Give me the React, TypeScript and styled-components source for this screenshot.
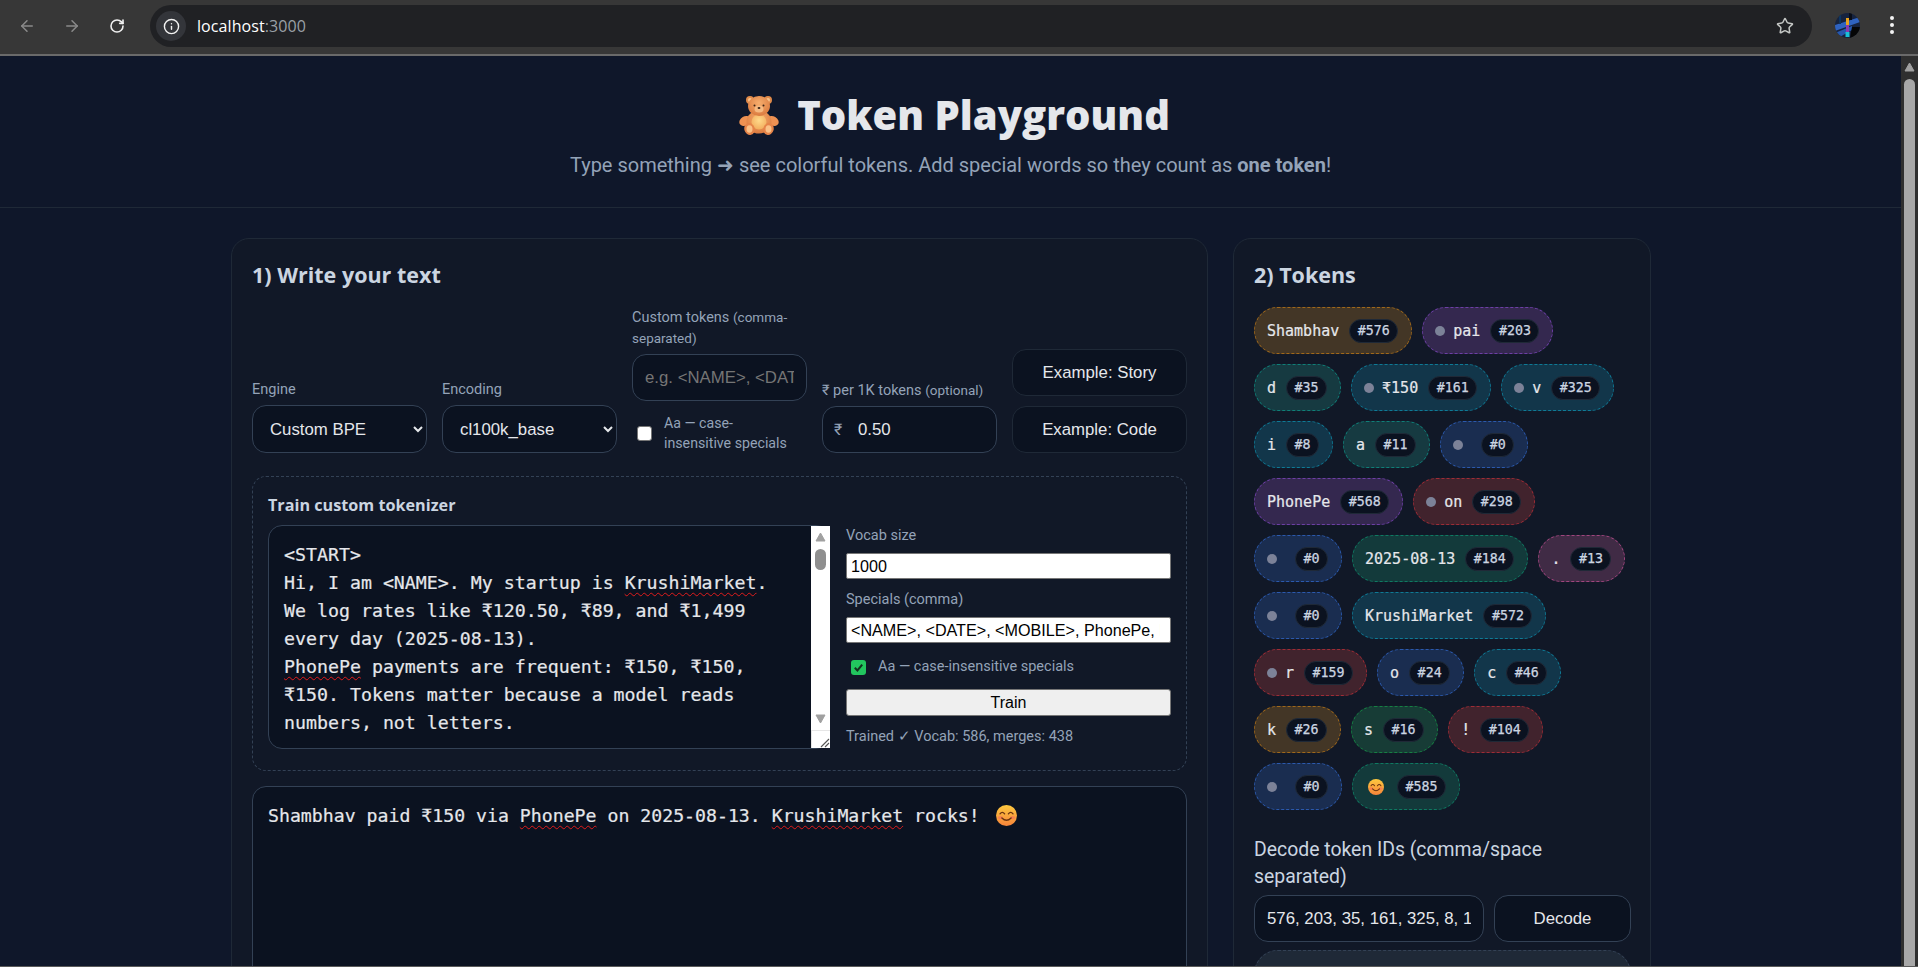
import React from 'react'
import styled, { createGlobalStyle } from 'styled-components'
import { ArrowLeft, ArrowRight, RotateCw, Info, Star } from 'lucide-react'

const UI = `Roboto, "Open Sans", sans-serif`
const DISPLAY = `"Open Sans", "Noto Sans", sans-serif`
const MONO = `"DejaVu Sans Mono", "Liberation Mono", monospace`
const ARIAL = `"Liberation Sans", Arial, sans-serif`

const GlobalStyle = createGlobalStyle`
  html, body { margin: 0; padding: 0; height: 100%; overflow: hidden; background: #0f172a; }
  * { box-sizing: border-box; }
`

const tones = {
  amber: { bg: '#433626', line: '#a0681a' },
  purple: { bg: '#34284f', line: '#6d3fa6' },
  teal: { bg: '#163a41', line: '#0f7f78' },
  cyan: { bg: '#12364a', line: '#0e7a96' },
  blue: { bg: '#1a2d50', line: '#2b59ad' },
  red: { bg: '#41232d', line: '#9e2c36' },
  emerald: { bg: '#133a3b', line: '#0f7a62' },
  pink: { bg: '#402b45', line: '#a0457e' },
  green: { bg: '#173c36', line: '#168043' },
}
type Tone = keyof typeof tones

type TokenData = { text: string; id: number; tone: Tone; space?: boolean; emoji?: boolean }

const tokens: TokenData[] = [
  { text: 'Shambhav', id: 576, tone: 'amber' },
  { text: 'pai', id: 203, tone: 'purple', space: true },
  { text: 'd', id: 35, tone: 'teal' },
  { text: '₹150', id: 161, tone: 'cyan', space: true },
  { text: 'v', id: 325, tone: 'cyan', space: true },
  { text: 'i', id: 8, tone: 'cyan' },
  { text: 'a', id: 11, tone: 'teal' },
  { text: '', id: 0, tone: 'blue', space: true },
  { text: 'PhonePe', id: 568, tone: 'purple' },
  { text: 'on', id: 298, tone: 'red', space: true },
  { text: '', id: 0, tone: 'blue', space: true },
  { text: '2025-08-13', id: 184, tone: 'emerald' },
  { text: '.', id: 13, tone: 'pink' },
  { text: '', id: 0, tone: 'blue', space: true },
  { text: 'KrushiMarket', id: 572, tone: 'cyan' },
  { text: 'r', id: 159, tone: 'red', space: true },
  { text: 'o', id: 24, tone: 'blue' },
  { text: 'c', id: 46, tone: 'cyan' },
  { text: 'k', id: 26, tone: 'amber' },
  { text: 's', id: 16, tone: 'green' },
  { text: '!', id: 104, tone: 'red' },
  { text: '', id: 0, tone: 'blue', space: true },
  { text: '', id: 585, tone: 'emerald', emoji: true },
]

const Bear = () => (
  <svg width="40" height="40" viewBox="0 0 40 40">
    <defs>
      <radialGradient id="bearFur" cx="50%" cy="35%" r="70%">
        <stop offset="0%" stopColor="#f6ad6c" />
        <stop offset="100%" stopColor="#d9773c" />
      </radialGradient>
      <radialGradient id="bearBelly" cx="50%" cy="40%" r="60%">
        <stop offset="0%" stopColor="#ffd98a" />
        <stop offset="100%" stopColor="#f3ae5e" />
      </radialGradient>
    </defs>
    <circle cx="11" cy="5" r="4" fill="#e08a4a" />
    <circle cx="29" cy="5" r="4" fill="#e08a4a" />
    <circle cx="11" cy="5" r="2" fill="#f8c48c" />
    <circle cx="29" cy="5" r="2" fill="#f8c48c" />
    <ellipse cx="6" cy="26" rx="6" ry="4.5" transform="rotate(-30 6 26)" fill="#ee9152" />
    <ellipse cx="34" cy="26" rx="6" ry="4.5" transform="rotate(30 34 26)" fill="#ee9152" />
    <ellipse cx="20" cy="27" rx="12.5" ry="11.5" fill="url(#bearFur)" />
    <ellipse cx="20" cy="27" rx="7.5" ry="7.5" fill="url(#bearBelly)" />
    <ellipse cx="20" cy="11" rx="11" ry="10" fill="url(#bearFur)" />
    <ellipse cx="20" cy="14" rx="4.5" ry="3.5" fill="#f6b980" />
    <circle cx="15.5" cy="10.5" r="1" fill="#3a2418" />
    <circle cx="24.5" cy="10.5" r="1" fill="#3a2418" />
    <ellipse cx="20" cy="13" rx="1.4" ry="1.1" fill="#3a2418" />
    <ellipse cx="10.5" cy="34" rx="5.2" ry="6" transform="rotate(-15 10.5 34)" fill="#e68449" />
    <ellipse cx="29.5" cy="34" rx="5.2" ry="6" transform="rotate(15 29.5 34)" fill="#e68449" />
    <ellipse cx="10.5" cy="34" rx="3" ry="3.8" fill="#fbc187" />
    <ellipse cx="29.5" cy="34" rx="3" ry="3.8" fill="#fbc187" />
  </svg>
)

const Smile = ({ size, id }: { size: number; id: string }) => (
  <svg width={size} height={size} viewBox="0 0 20 20">
    <defs>
      <linearGradient id={id} x1="0" y1="0" x2="0" y2="1">
        <stop offset="0%" stopColor="#fdc93f" />
        <stop offset="100%" stopColor="#f7843a" />
      </linearGradient>
    </defs>
    <circle cx="10" cy="10" r="10" fill={`url(#${id})`} />
    <ellipse cx="4.2" cy="12" rx="2.4" ry="1.6" fill="#f76d5e" opacity="0.6" />
    <ellipse cx="15.8" cy="12" rx="2.4" ry="1.6" fill="#f76d5e" opacity="0.6" />
    <path d="M3.8 8.4 Q6 5.6 8.2 8.4 M11.8 8.4 Q14 5.6 16.2 8.4" fill="none" stroke="#6b3410" strokeWidth="1.3" strokeLinecap="round" />
    <path d="M5.6 12.4 Q10 16.8 14.4 12.4" fill="none" stroke="#6b3410" strokeWidth="1.3" strokeLinecap="round" />
  </svg>
)

const Avatar = () => (
  <svg width="25" height="25" viewBox="0 0 25 25">
    <defs>
      <clipPath id="avatarClip"><circle cx="12.5" cy="12.5" r="12.5" /></clipPath>
    </defs>
    <g clipPath="url(#avatarClip)">
      <rect width="25" height="25" fill="#16233f" />
      <path d="M0 12 L25 4 L25 9 L0 18 Z" fill="#2f63c0" />
      <path d="M0 20 L17 13 L17 17 L3 25 Z" fill="#2558b0" />
      <path d="M17 14 L25 14 L25 25 L15 25 Z" fill="#050505" />
      <rect x="4" y="0" width="2" height="11" fill="#0d3560" />
      <rect x="14" y="0" width="3" height="7" fill="#090d18" />
      <rect x="11" y="5" width="3" height="8" fill="#e8a31e" />
      <rect x="11" y="12" width="3" height="7" fill="#8a3ab0" />
      <rect x="10.5" y="19" width="4" height="5" fill="#18c0d8" />
    </g>
  </svg>
)

const Triangle = ({ down }: { down?: boolean }) => (
  <svg width="11" height="10" viewBox="0 0 11 10">
    <path d={down ? 'M1 1 H10 L5.5 9 Z' : 'M5.5 1 L10 9 H1 Z'} fill="#a0a0a0" stroke="#a0a0a0" strokeLinejoin="round" />
  </svg>
)

const App = () => {
  return (
    <>
      <GlobalStyle />
      <Shell>
        <Toolbar>
          <NavButtons>
            <NavIcon $dim><ArrowLeft size={18} strokeWidth={2} /></NavIcon>
            <NavIcon $dim><ArrowRight size={18} strokeWidth={2} /></NavIcon>
            <NavIcon><RotateCw size={16} strokeWidth={2.4} /></NavIcon>
          </NavButtons>
          <Omnibox>
            <SiteInfo><Info size={17} strokeWidth={2} /></SiteInfo>
            <Url>localhost<UrlPort>:3000</UrlPort></Url>
            <StarIcon><Star size={18} strokeWidth={2} /></StarIcon>
          </Omnibox>
          <ProfileSlot><Avatar /></ProfileSlot>
          <MenuDots><i /><i /><i /></MenuDots>
        </Toolbar>
        <ToolbarEdge />
        <Viewport>
          <Page>
            <Header>
              <Title><Bear /><span>Token Playground</span></Title>
              <Subtitle>Type something ➜ see colorful tokens. Add special words so they count as <b>one token</b>!</Subtitle>
            </Header>
            <Main>
              <Panel $width={977}>
                <PanelTitle>1) Write your text</PanelTitle>
                <Controls>
                  <Field>
                    <FieldLabel>Engine</FieldLabel>
                    <Select defaultValue="bpe">
                      <option value="bpe">Custom BPE</option>
                    </Select>
                  </Field>
                  <Field>
                    <FieldLabel>Encoding</FieldLabel>
                    <Select defaultValue="cl100k">
                      <option value="cl100k">cl100k_base</option>
                    </Select>
                  </Field>
                  <Field>
                    <FieldLabel>Custom tokens <small>(comma-separated)</small></FieldLabel>
                    <DarkInput placeholder="e.g. <NAME>, <DATE>" readOnly />
                    <CheckRow>
                      <PlainCheck />
                      <CheckText>Aa — case-insensitive specials</CheckText>
                    </CheckRow>
                  </Field>
                  <Field>
                    <FieldLabel>₹ per 1K tokens <small>(optional)</small></FieldLabel>
                    <PriceBox>
                      <Rupee>₹</Rupee>
                      <PriceInput defaultValue="0.50" readOnly />
                    </PriceBox>
                  </Field>
                  <ButtonStack>
                    <DarkButton>Example: Story</DarkButton>
                    <DarkButton>Example: Code</DarkButton>
                  </ButtonStack>
                </Controls>

                <TrainBox>
                  <TrainTitle>Train custom tokenizer</TrainTitle>
                  <TrainGrid>
                    <Editor>
                      <EditorText>
                        {'<START>\nHi, I am <NAME>. My startup is '}<Misspelt>KrushiMarket</Misspelt>{'.\nWe log rates like ₹120.50, ₹89, and ₹1,499\nevery day (2025-08-13).\n'}
                        <Misspelt>PhonePe</Misspelt>{' payments are frequent: ₹150, ₹150,\n₹150. Tokens matter because a model reads\nnumbers, not letters.'}
                      </EditorText>
                      <EditorRail>
                        <Triangle />
                        <RailThumb />
                        <RailDown><Triangle down /></RailDown>
                        <ResizeCorner>
                          <svg width="10" height="10" viewBox="0 0 10 10">
                            <path d="M1 9 L9 1 M5 9 L9 5" stroke="#555" strokeWidth="1.1" />
                          </svg>
                        </ResizeCorner>
                      </EditorRail>
                    </Editor>
                    <TrainSide>
                      <SideLabel>Vocab size</SideLabel>
                      <LightInput defaultValue="1000" readOnly />
                      <SideLabel>Specials (comma)</SideLabel>
                      <LightInput defaultValue="<NAME>, <DATE>, <MOBILE>, PhonePe, KrushiMarket" readOnly />
                      <SideCheckRow>
                        <GreenCheck>
                          <svg width="11" height="11" viewBox="0 0 11 11">
                            <path d="M1.8 5.8 L4.4 8.4 L9.2 2.6" fill="none" stroke="#14301f" strokeWidth="2" />
                          </svg>
                        </GreenCheck>
                        <SideLabelInline>Aa — case-insensitive specials</SideLabelInline>
                      </SideCheckRow>
                      <TrainButton>Train</TrainButton>
                      <TrainStatus>Trained ✓ Vocab: 586, merges: 438</TrainStatus>
                    </TrainSide>
                  </TrainGrid>
                </TrainBox>

                <TextBox>
                  <span>Shambhav paid ₹150 via <Misspelt>PhonePe</Misspelt> on 2025-08-13. <Misspelt>KrushiMarket</Misspelt> rocks! </span>
                  <TextEmoji><Smile size={21} id="smileText" /></TextEmoji>
                </TextBox>
              </Panel>

              <Panel $width={418}>
                <PanelTitle>2) Tokens</PanelTitle>
                <TokenList>
                  {tokens.map((t, i) => (
                    <Token key={i} $tone={t.tone}>
                      {t.space && <SpaceDot />}
                      {t.emoji ? <TokenEmoji><Smile size={16} id="smileToken" /></TokenEmoji> : <span>{t.text}</span>}
                      <TokenId>#{t.id}</TokenId>
                    </Token>
                  ))}
                </TokenList>
                <DecodeLabel>Decode token IDs (comma/space separated)</DecodeLabel>
                <DecodeRow>
                  <DarkInput defaultValue="576, 203, 35, 161, 325, 8, 11, 0, 568, 298" readOnly />
                  <DecodeButton>Decode</DecodeButton>
                </DecodeRow>
                <DecodedBox>Shambhav paid ₹150 via PhonePe on 2025-08-13. KrushiMarket</DecodedBox>
              </Panel>
            </Main>
          </Page>
          <PageScrollbar>
            <Triangle />
            <PageThumb />
          </PageScrollbar>
        </Viewport>
        <BottomEdge />
      </Shell>
    </>
  )
}

export default App

const Shell = styled.div`
  height: 967px;
  display: flex;
  flex-direction: column;
  overflow: hidden;
`
const Toolbar = styled.div`
  height: 54px;
  flex: none;
  display: flex;
  align-items: flex-start;
  padding-top: 5px;
  background: #373737;
`
const ToolbarEdge = styled.div`
  height: 2px;
  flex: none;
  background: #6a6a6a;
`
const NavButtons = styled.div`
  width: 150px;
  height: 42px;
  flex: none;
  display: flex;
  align-items: center;
  padding-left: 18px;
  gap: 27px;
`
const NavIcon = styled.span<{ $dim?: boolean }>`
  width: 18px;
  height: 18px;
  display: flex;
  align-items: center;
  justify-content: center;
  color: ${p => (p.$dim ? '#8a8a8a' : '#f0f0f0')};
`
const Omnibox = styled.div`
  width: 1662px;
  height: 42px;
  flex: none;
  display: flex;
  align-items: center;
  padding: 0 18px 0 6px;
  border-radius: 21px;
  background: #202124;
`
const SiteInfo = styled.span`
  width: 30px;
  height: 30px;
  display: flex;
  align-items: center;
  justify-content: center;
  border-radius: 50%;
  color: #f2f2f2;
  background: #33353a;
`
const Url = styled.span`
  margin-left: 11px;
  font: 16px ${DISPLAY};
  letter-spacing: 0.08px;
  color: #fff;
`
const UrlPort = styled.span`
  color: #9aa0a6;
`
const StarIcon = styled.span`
  display: flex;
  margin-left: auto;
  color: #c4c7c5;
`
const ProfileSlot = styled.div`
  flex: none;
  display: flex;
  margin: 8px 0 0 23px;
`
const MenuDots = styled.div`
  flex: none;
  display: flex;
  flex-direction: column;
  gap: 3px;
  margin: 11px 0 0 30px;

  i {
    display: block;
    width: 4px;
    height: 4px;
    border-radius: 50%;
    background: #f4f4f4;
  }
`
const Viewport = styled.div`
  flex: 1;
  min-height: 0;
  display: flex;
`
const Page = styled.div`
  flex: 1;
  min-width: 0;
  overflow: hidden;
  background: #0f172a;
  color: #e5e7eb;
  font-family: ${UI};
`
const Header = styled.header`
  height: 152px;
  border-bottom: 1px solid #1f2937;
  text-align: center;
  padding-top: 37px;
`
const Title = styled.h1`
  margin: 0;
  height: 44px;
  display: flex;
  align-items: center;
  justify-content: center;
  gap: 18px;
  font: 800 40px/44px ${DISPLAY};
  color: #e5e7eb;
  transform: translateX(4px);
`
const Subtitle = styled.p`
  margin: 15px 0 0;
  font: 400 20px/26px ${UI};
  color: #94a3b8;

  b { font-weight: 700; }
`
const Main = styled.main`
  display: flex;
  align-items: flex-start;
  gap: 25px;
  padding: 30px 0 0 231px;
`
const Panel = styled.section<{ $width: number }>`
  width: ${p => p.$width}px;
  height: 800px;
  flex: none;
  padding: 20px;
  border: 1px solid #1f2937;
  border-radius: 18px;
  background: #111827;
`
const PanelTitle = styled.h2`
  margin: 0;
  height: 32px;
  font: 700 21.5px/32px ${DISPLAY};
  color: #cbd5e1;
`
const Controls = styled.div`
  display: grid;
  grid-template-columns: repeat(5, 175px);
  gap: 15px;
  align-items: end;
  margin: 16px 0 23px;
`
const Field = styled.div`
  display: flex;
  flex-direction: column;
`
const FieldLabel = styled.label`
  margin-bottom: 5px;
  font: 400 14.5px/20px ${UI};
  color: #94a3b8;

  small { font-size: 13.5px; }
`
const Select = styled.select`
  height: 48px;
  padding: 0 13px;
  border: 1px solid #334155;
  border-radius: 14px;
  background: #0b1220;
  color: #e5e7eb;
  font: 16.8px ${ARIAL};
`
const DarkInput = styled.input`
  width: 100%;
  min-width: 0;
  height: 47px;
  padding: 0 12px;
  border: 1px solid #334155;
  border-radius: 14px;
  outline: none;
  background: #0b1220;
  color: #e5e7eb;
  font: 16.8px ${ARIAL};

  &::placeholder { color: #757575; }
`
const CheckRow = styled.div`
  display: flex;
  align-items: center;
  height: 40px;
  margin-top: 12px;
  padding-left: 5px;
  gap: 12px;
`
const PlainCheck = styled.span`
  width: 15px;
  height: 15px;
  flex: none;
  border: 1px solid #767676;
  border-radius: 3px;
  background: #fff;
`
const CheckText = styled.span`
  width: 128px;
  font: 400 14.2px/20px ${UI};
  color: #94a3b8;
`
const PriceBox = styled.div`
  position: relative;
  display: flex;
  align-items: center;
  height: 47px;
  border: 1px solid #334155;
  border-radius: 14px;
  background: #0b1220;
`
const Rupee = styled.span`
  margin-left: 11px;
  width: 24px;
  flex: none;
  font: 16px ${UI};
  color: #94a3b8;
`
const PriceInput = styled.input`
  width: 100px;
  border: 0;
  outline: none;
  padding: 0;
  background: transparent;
  color: #e5e7eb;
  font: 16.8px ${ARIAL};
`
const ButtonStack = styled.div`
  display: flex;
  flex-direction: column;
  gap: 10px;
`
const DarkButton = styled.button`
  height: 47px;
  flex: none;
  border: 1px solid #1f2937;
  border-radius: 14px;
  background: #0b1220;
  color: #e5e7eb;
  font: 16.8px ${ARIAL};
`
const DecodeButton = styled(DarkButton)`
  border-color: #334155;
`
const TrainBox = styled.div`
  height: 295px;
  padding: 16px 15px 0;
  border: 1px dashed #334155;
  border-radius: 14px;
`
const TrainTitle = styled.div`
  height: 24px;
  margin-bottom: 8px;
  font: 700 16.2px/24px ${DISPLAY};
  color: #cbd5e1;
`
const TrainGrid = styled.div`
  display: grid;
  grid-template-columns: 562px 325px;
  gap: 16px;
`
const Editor = styled.div`
  height: 224px;
  display: flex;
  border: 1px solid #334155;
  border-radius: 14px;
  background: #0b1220;
`
const EditorText = styled.div`
  flex: 1;
  min-width: 0;
  overflow: hidden;
  padding: 15px 15px 0;
  white-space: pre;
  font: 400 18.25px/28px ${MONO};
  -webkit-text-stroke: 0.2px;
  color: #e5e7eb;
`
const Misspelt = styled.span`
  text-decoration: underline wavy #e01b1b 1px;
  text-underline-offset: 3px;
`
const EditorRail = styled.div`
  width: 19px;
  flex: none;
  display: flex;
  flex-direction: column;
  align-items: center;
  margin-right: -1px;
  padding-top: 6px;
  background: #fff;
`
const RailThumb = styled.div`
  width: 11px;
  height: 21px;
  margin-top: 7px;
  border-radius: 6px;
  background: #8f8f8f;
`
const RailDown = styled.div`
  display: flex;
  margin-top: auto;
  margin-bottom: 6px;
`
const ResizeCorner = styled.div`
  width: 100%;
  height: 18px;
  display: flex;
  align-items: flex-end;
  justify-content: flex-end;
  border-top: 1px solid #e6e6e6;
  border-left: 1px solid #e6e6e6;
`
const TrainSide = styled.div`
  display: flex;
  flex-direction: column;
  padding-top: 1px;
`
const SideLabel = styled.label`
  height: 20px;
  margin-bottom: 7px;
  font: 400 14.5px/20px ${UI};
  color: #94a3b8;
`
const LightInput = styled.input`
  height: 26px;
  flex: none;
  margin-bottom: 11px;
  padding: 0 10px 0 4px;
  border: 1px solid #767676;
  border-radius: 2px;
  outline: none;
  background: #fff;
  color: #000;
  font: 16.15px ${ARIAL};
`
const SideCheckRow = styled.div`
  display: flex;
  align-items: center;
  height: 16px;
  margin: 5px 0 14px;
  padding-left: 5px;
  gap: 12px;
`
const GreenCheck = styled.span`
  width: 15px;
  height: 15px;
  flex: none;
  display: flex;
  align-items: center;
  justify-content: center;
  border-radius: 3px;
  background: #22c55e;
`
const SideLabelInline = styled.span`
  font: 400 14.5px/20px ${UI};
  color: #94a3b8;
`
const TrainButton = styled.button`
  height: 27px;
  flex: none;
  margin-bottom: 11px;
  border: 1px solid #767676;
  border-radius: 3px;
  background: #efefef;
  color: #000;
  font: 16px ${ARIAL};
`
const TrainStatus = styled.div`
  font: 400 14.5px/20px ${UI};
  color: #94a3b8;
`
const TextBox = styled.div`
  height: 400px;
  margin-top: 15px;
  padding: 15px;
  border: 1px solid #334155;
  border-radius: 14px;
  background: #0b1220;
  font: 400 18.2px/28px ${MONO};
  -webkit-text-stroke: 0.2px;
  color: #e5e7eb;
  white-space: pre;
  display: flex;
  align-items: flex-start;
`
const TextEmoji = styled.span`
  display: flex;
  margin-top: 3px;
  margin-left: 5px;
`
const TokenList = styled.div`
  display: flex;
  flex-wrap: wrap;
  gap: 10px;
  margin-top: 16px;
`
const Token = styled.span<{ $tone: Tone }>`
  height: 47px;
  display: inline-flex;
  align-items: center;
  padding: 0 13px 0 12px;
  border: 1px dashed ${p => tones[p.$tone].line};
  border-radius: 24px;
  background: ${p => tones[p.$tone].bg};
  font: 400 15px/20px ${MONO};
  -webkit-text-stroke: 0.2px;
  color: #e5e7eb;
  white-space: pre;
`
const SpaceDot = styled.i`
  width: 10px;
  height: 10px;
  flex: none;
  margin-right: 8px;
  border-radius: 50%;
  background: #7c8298;
`
const TokenEmoji = styled.span`
  width: 22px;
  display: flex;
  padding-left: 3px;
`
const TokenId = styled.span`
  height: 24px;
  margin-left: 10px;
  padding: 0 7.5px;
  border: 1px solid #1f2937;
  border-radius: 12px;
  background: #0b1220;
  font: 400 13.3px/22px ${MONO};
  -webkit-text-stroke: 0.25px;
  color: #cbd5e1;
`
const DecodeLabel = styled.div`
  max-width: 340px;
  margin-top: 26px;
  font: 400 19.4px/27px ${UI};
  color: #cbd5e1;
`
const DecodeRow = styled.div`
  display: grid;
  grid-template-columns: 230px 137px;
  gap: 10px;
  margin-top: 5px;
`
const DecodedBox = styled.div`
  width: 377px;
  height: 120px;
  margin-top: 8px;
  padding: 14px 14px;
  border: 1px dashed #334155;
  border-radius: 24px;
  background: #1f2937;
  font: 500 15px/24px ${MONO};
  color: #e5e7eb;
`
const PageScrollbar = styled.div`
  width: 17px;
  flex: none;
  display: flex;
  flex-direction: column;
  align-items: center;
  padding-top: 6px;
  background: #2f2f2f;
`
const PageThumb = styled.div`
  width: 11px;
  flex: 1;
  margin-top: 7px;
  margin-bottom: -20px;
  border-radius: 6px;
  background: #a8a8a8;
`
const BottomEdge = styled.div`
  height: 1px;
  flex: none;
  background: #5a5a5a;
`
